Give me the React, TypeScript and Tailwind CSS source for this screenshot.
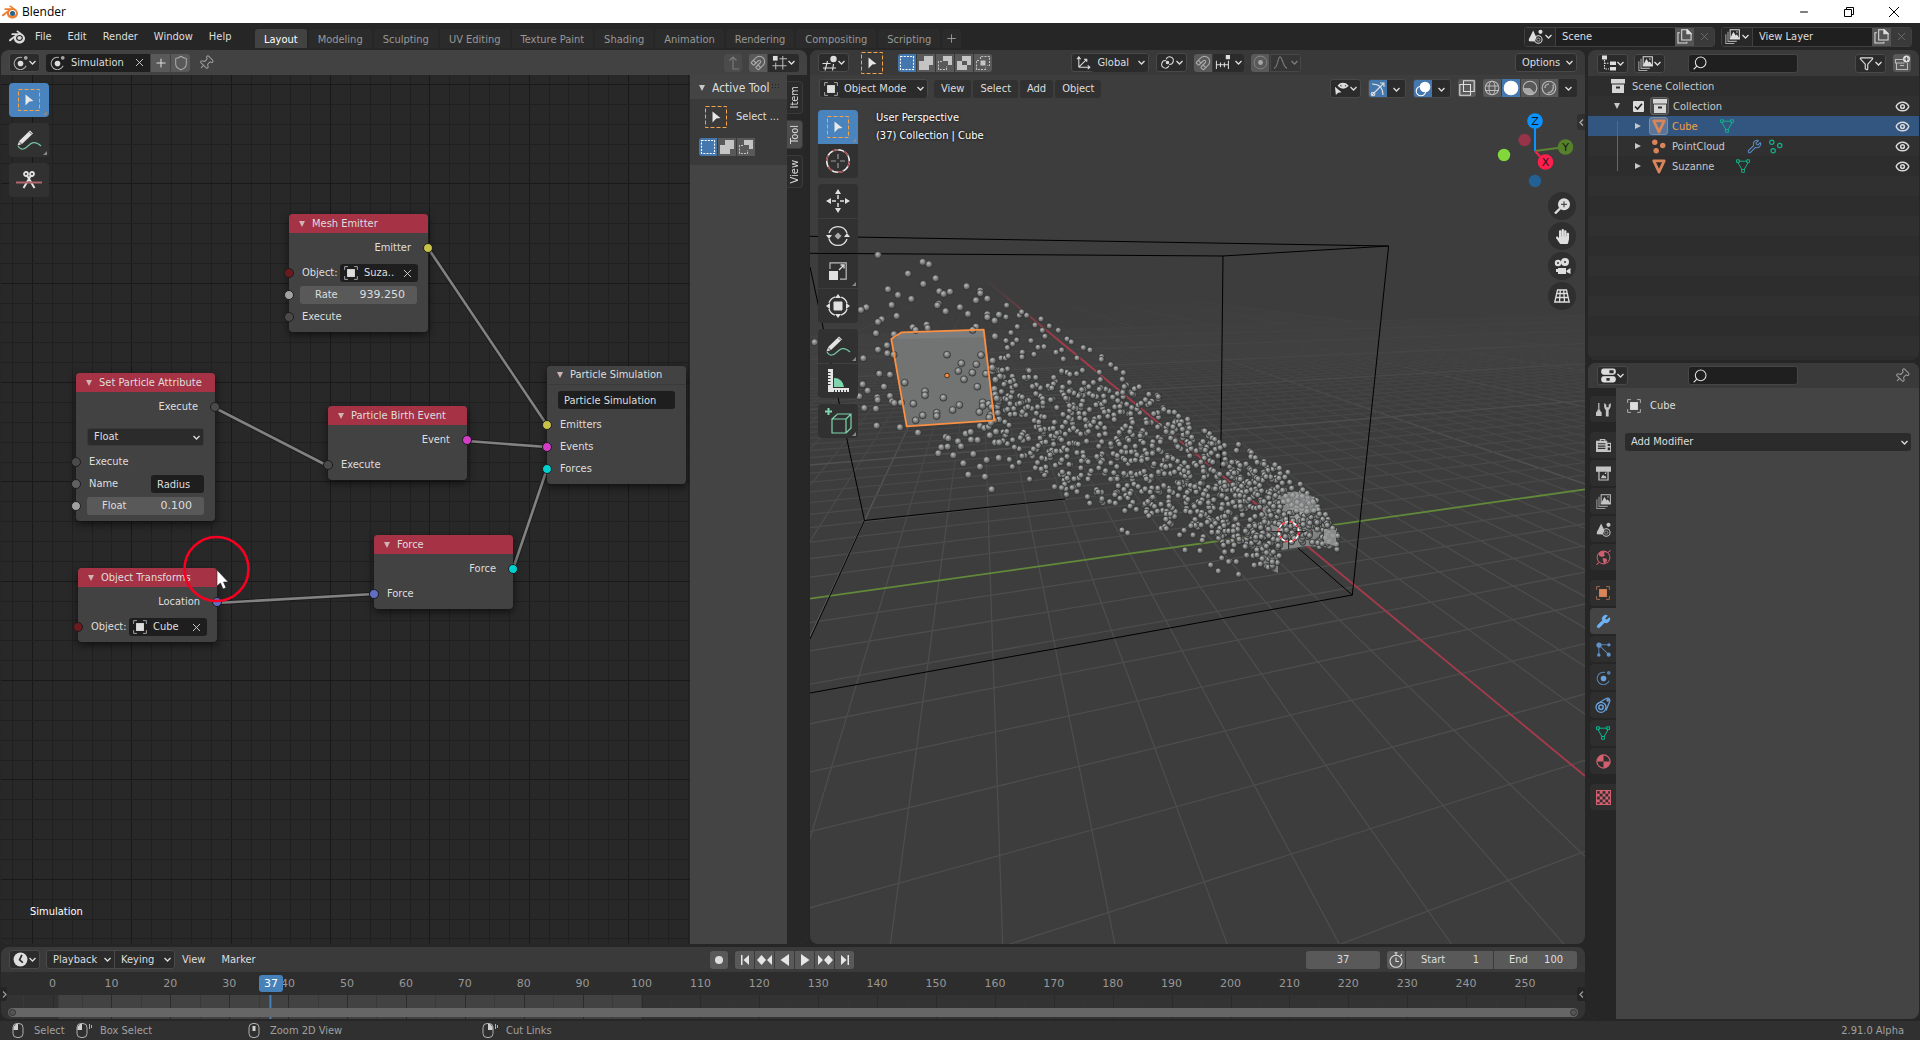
import React from "react";
import { Shield, Pin, Magnet, X, Plus, Search, Eye, Filter, Wrench, Minus } from "lucide-react";
import { SiBlender } from "react-icons/si";
import { FaHandPaper } from "react-icons/fa";

type Kids = { children?: React.ReactNode };

/* ---------- icons ---------- */

const Ic = ({ s = 14, c = "", children }: Kids & { s?: number; c?: string }) => (
  <svg width={s} height={s} viewBox="0 0 16 16" fill="none" stroke="currentColor" strokeWidth="1.1" className={`shrink-0 ${c}`} aria-hidden="true">
    {children}
  </svg>
);
const Chevron = ({ c = "" }: { c?: string }) => (
  <svg width="7" height="5" viewBox="0 0 7 5" fill="none" stroke="currentColor" strokeWidth="1.3" className={`shrink-0 ${c}`} aria-hidden="true">
    <path d="M.5 1l3 3 3-3" />
  </svg>
);
const PhysicsIcon = ({ c }: { c?: string }) => (
  <Ic s={15} c={c}>
    <circle cx="8" cy="9" r="3" fill="currentColor" stroke="none" />
    <path d="M14 11.5A6.6 6.6 0 1 1 9.5 2.6" opacity=".75" />
    <circle cx="13.6" cy="3" r="2" fill="currentColor" stroke="none" opacity=".7" />
  </Ic>
);
const ObjectIcon = ({ c }: { c?: string }) => (
  <Ic c={c}>
    <rect x="3.5" y="3.5" width="9" height="9" fill="currentColor" stroke="none" />
    <path d="M.7 4.5V.7h3.8M11.5.7h3.8v3.8M15.3 11.5v3.8h-3.8M4.5 15.3H.7v-3.8" opacity=".7" />
  </Ic>
);
const SelectBoxIcon = ({ s = 22 }: { s?: number }) => (
  <svg width={s} height={s} viewBox="0 0 22 22" aria-hidden="true" className="shrink-0">
    <path d="M.5.5h21v21H.5z" fill="none" stroke="#f7a347" strokeDasharray="4 2" />
    <path d="M7.5 5.5l8 6.5-4.2.4-3.8 4z" fill="#e8e8e8" />
  </svg>
);
const AnnotateIcon = () => (
  <svg width="26" height="22" viewBox="0 0 26 22" fill="none" aria-hidden="true">
    <path d="M2 17c3 5 7 3 10 0s7-6 13 0" stroke="#73c2a0" strokeWidth="1.2" />
    <path d="M1.5 16.5l1.7-4.5L14 1.6l3 3L6 15z" fill="#e4e4e4" />
    <path d="M13.5 3l2.5 2.5M3 12.5l3 3" stroke="#333" strokeWidth=".8" />
  </svg>
);
const MeshIcon = ({ c }: { c?: string }) => (
  <Ic c={c}>
    <path d="M3 2.5h10M2.5 4.5l4.5 8M13.5 4.5l-4.5 8" />
    <path d="M.6.9h3.2v3.2H.6zM12.2.9h3.2v3.2h-3.2zM6.4 12h3.2v3.2H6.4z" />
  </Ic>
);
const ConeIcon = () => (
  <svg width="14" height="15" viewBox="0 0 14 15" className="shrink-0" aria-hidden="true">
    <path d="M1.8 1.8h10.4L7 13z" fill="none" stroke="#d9855a" strokeWidth="2.8" strokeLinejoin="round" />
  </svg>
);
const ImagesIcon = ({ c }: { c?: string }) => (
  <Ic s={15} c={c}>
    <path d="M5.5.7h9.8v10H5.5z" />
    <path d="M6 10l3-6 2.5 4 1-1.5 2.3 3.5z" fill="currentColor" />
    <circle cx="12.7" cy="3.2" r=".8" fill="currentColor" stroke="none" />
    <path d="M3.2 3v10.2h9.3M.9 5.5v10H10" opacity=".7" />
  </Ic>
);
const SceneIcon = ({ c }: { c?: string }) => (
  <Ic s={15} c={c}>
    <path d="M5.5 1.5L9 9l-2 4.3L1 13c-.5-2 .3-3.5 1.3-4.8z" fill="currentColor" stroke="none" />
    <circle cx="11" cy="11.3" r="4" />
    <circle cx="11" cy="11.3" r="1.8" opacity=".6" />
    <circle cx="13.3" cy="3" r="2.2" fill="currentColor" stroke="none" />
  </Ic>
);
const CopyIcon = () => (
  <Ic s={15}>
    <path d="M5 .8h6l4 4v7H5z" />
    <path d="M10.5.8V5H15z" fill="currentColor" />
    <path d="M3 4H1v11h9.5v-1.5" />
  </Ic>
);
const BoxIcon = () => (
  <svg width="14" height="14" viewBox="0 0 14 14" className="shrink-0" aria-hidden="true">
    <path d="M0 0h14v4.500H0zM1 5.500h12V14H1z" fill="#d6d6d6" />
    <path d="M5 7.500h4v2H5z" fill="#2d2d2d" />
  </svg>
);
const ViewportEditorIcon = () => (
  <Ic s={16}>
    <path d="M.5 8.5h8M1 13h13M5.5 6l-2.5 9.5M11.5 9l-1 6.5" />
    <circle cx="11.5" cy="4" r="3.2" fill="currentColor" stroke="none" />
  </Ic>
);
const SnapGridIcon = () => (
  <Ic s={15}>
    <rect x="1" y="1" width="5" height="5" fill="currentColor" stroke="none" />
    <path d="M4 8v7.5M11.5 1v14.5M8 4h8M.5 11.5h15" opacity=".8" />
  </Ic>
);
const SnapIncrementIcon = () => (
  <Ic s={15}>
    <rect x="11.5" y="0" width="4.5" height="4.5" fill="currentColor" stroke="none" />
    <path d="M1.5 6v9M5.8 8v5M10 8v5M14.3 6v9M1.5 10.5h12.8" />
  </Ic>
);
const OutlinerIcon = () => (
  <Ic s={16}>
    <path d="M1 .5h5v4H1zM9 6.500h6v3.500H9zM9 12h6v3.500H9z" fill="currentColor" stroke="none" />
    <path d="M3.5 5v9H8M3.5 8.3H8" strokeDasharray="1.5 1" />
  </Ic>
);
const PropsIcon = () => (
  <Ic s={15}>
    <rect x=".8" y="1.2" width="14.4" height="5.4" rx="2" fill="currentColor" />
    <rect x=".8" y="9.4" width="14.4" height="5.4" rx="2" fill="currentColor" />
    <path d="M9 2.500h4.500v3H9zM5.800 10.600h3.500v3H5.800z" fill="#2b2b2b" stroke="none" />
  </Ic>
);
const ClockIcon = () => (
  <Ic s={15}>
    <circle cx="8" cy="8" r="7.4" fill="currentColor" stroke="none" />
    <path d="M9.5 3L7 8.3l3.5 3" stroke="#2b2b2b" strokeWidth="1.8" />
  </Ic>
);
const PivotIcon = () => (
  <Ic s={15}>
    <path d="M6.5 6A4 4 0 1 0 9.5 11.5" />
    <path d="M6.5 4.5A4 4 0 1 1 9.8 10" />
    <circle cx="8" cy="8" r="1.3" fill="currentColor" />
  </Ic>
);
const AxesIcon = () => (
  <Ic s={15}>
    <path d="M3 13V2.500M3 13h11.500M3 13l8-8M1 4.500L3 2l2 2.500M12.500 11l2.300 2-2.300 2M8.500 4.500H11.500v3" />
  </Ic>
);

/* ---------- shared controls ---------- */

const Drop = ({ label, c = "", children }: Kids & { label: string; c?: string }) => (
  <button aria-label={label} className={`flex h-[19px] w-[31px] shrink-0 items-center justify-between rounded-[3px] border border-[#494949] bg-[#2b2b2b] px-[3px] ${c}`}>
    {children}
    <Chevron />
  </button>
);
const Btn = ({ label, c = "", children }: Kids & { label: string; c?: string }) => (
  <button aria-label={label} className={`flex h-[18px] w-[18px] shrink-0 items-center justify-center ${c}`}>
    {children}
  </button>
);
const Pick = ({ label, value, c = "", pad = "pl-1.5" }: { label: string; value: string; c?: string; pad?: string }) => (
  <span className={`relative flex h-[18px] items-center rounded-[3px] bg-[#2b2b2b] ${c}`}>
    <select aria-label={label} className={`h-full w-full appearance-none bg-transparent pr-3 outline-none ${pad}`}>
      <option>{value}</option>
    </select>
    <Chevron c="pointer-events-none absolute right-[3px]" />
  </span>
);
const SearchBox = ({ label }: { label: string }) => (
  <label className="flex h-[19px] w-[110px] items-center rounded-[3px] border border-[#464646] bg-[#1f1f1f] pl-[3px]">
    <Search size={16} strokeWidth={1.6} className="shrink-0 -scale-x-100" />
    <input aria-label={label} className="w-full min-w-0 bg-transparent outline-none" />
  </label>
);
const SelectModes = ({ n }: { n: number }) => {
  const art = [
    <rect key="a" x="1.5" y="1.5" width="13" height="13" strokeDasharray="2 1.2" stroke="#fff" />,
    <path key="b" d="M6 1h9v9h-4v5H1V6h5z" fill="currentColor" stroke="none" />,
    <g key="c"><path d="M6 1h9v9h-4V6H6z" fill="currentColor" stroke="none" /><path d="M5 6.500H1.500v8h8V11" strokeDasharray="2 1.2" /></g>,
    <path key="d" fillRule="evenodd" d="M6 1h9v9h-4v5H1V6h5zM6 6v4h5V6z" fill="currentColor" stroke="none" />,
    <g key="e"><path d="M5.500 5.500h5v5h-5z" fill="currentColor" stroke="none" /><path d="M5.500 4V1.500h9v9H12M4 5.500H1.500v9h9V12" strokeDasharray="2 1.2" /></g>,
  ];
  const names = ["Set", "Extend", "Subtract", "Difference", "Intersect"];
  return (
    <div className="flex gap-px overflow-hidden rounded-[3px]">
      {art.slice(0, n).map((a, i) => (
        <Btn key={i} label={names[i]} c={i === 0 ? "bg-[#4477ae]" : "bg-[#595959] text-[#c4c4c4]"}>
          <Ic s={16}>{a}</Ic>
        </Btn>
      ))}
    </div>
  );
};
const ToolCell = ({ label, on, corner, c = "", children }: Kids & { label: string; on?: boolean; corner?: boolean; c?: string }) => (
  <button aria-label={label} className={`relative flex h-[34px] w-10 items-center justify-center ${on ? "bg-[#4a84be]" : "bg-[#313131]"} ${c}`}>
    {children}
    {corner && <span className="absolute bottom-0.5 right-0.5 border-b-4 border-l-4 border-b-[#888] border-l-transparent" />}
  </button>
);

/* ---------- title bar and top bar ---------- */

const TitleBar = () => (
  <header className="flex h-[23px] shrink-0 items-center bg-white pl-[2px] text-black">
    <span className="relative mr-1 flex">
      <SiBlender size={16} color="#ee7e30" />
      <span className="absolute left-[8px] top-[7px] h-[5px] w-[5px] rounded-full bg-[#24618f]" />
    </span>
    <h1 className="font-['Open_Sans',sans-serif] text-xs">Blender</h1>
    <div className="ml-auto flex pr-1">
      <button aria-label="Minimise" className="flex h-5 w-[45px] items-center justify-center"><Minus size={12} strokeWidth={2} /></button>
      <button aria-label="Restore" className="flex h-5 w-[45px] items-center justify-center">
        <svg width="10" height="10" viewBox="0 0 10 10" fill="none" stroke="#000" aria-hidden="true"><path d="M.5 2.500h7v7h-7zM2.500 2.500v-2h7v7h-2" /></svg>
      </button>
      <button aria-label="Close" className="flex h-5 w-[45px] items-center justify-center">
        <svg width="10" height="10" viewBox="0 0 10 10" stroke="#000" aria-hidden="true"><path d="M0 0l10 10M10 0L0 10" /></svg>
      </button>
    </div>
  </header>
);

const IdBlock = ({ icon, name, label }: { icon: React.ReactNode; name: string; label: string }) => (
  <div className="flex h-5 w-[191px] items-stretch overflow-hidden rounded-[3px] border border-[#404040] bg-[#1f1f1f]">
    <button aria-label={label} className="flex w-[31px] items-center justify-between border-r border-[#404040] bg-[#282828] px-[3px]">{icon}<Chevron /></button>
    <input aria-label={`${label} name`} defaultValue={name} className="w-0 flex-1 bg-transparent pl-1.5 outline-none" />
    <button aria-label={`New ${label}`} className="flex w-[19px] items-center justify-center bg-[#545454]"><CopyIcon /></button>
    <button aria-label={`Remove ${label}`} className="flex w-5 items-center justify-center bg-[#3a3a3a] text-[#777]"><X size={13} strokeWidth={1.4} /></button>
  </div>
);

const TopBar = () => (
  <div className="flex h-[27px] shrink-0 items-center pr-2">
    <button aria-label="Blender menu" className="ml-[9px] mr-0.5"><SiBlender size={16} color="#dadada" /></button>
    <nav className="flex w-[220px]">
      {["File", "Edit", "Render", "Window", "Help"].map((m) => (
        <button key={m} className="px-2">{m}</button>
      ))}
    </nav>
    <div className="ml-2 flex gap-0.5 self-end pb-0.5">
      {["Layout", "Modeling", "Sculpting", "UV Editing", "Texture Paint", "Shading", "Animation", "Rendering", "Compositing", "Scripting"].map((t, i) => (
        <button key={t} className={`h-[19px] rounded-t-[3px] px-[9px] pt-0.5 ${i === 0 ? "bg-[#424242] text-white" : "bg-[#2b2b2b] text-[#989898]"}`}>{t}</button>
      ))}
      <button aria-label="Add workspace" className="flex h-[19px] w-[19px] items-center justify-center rounded-t-[3px] bg-[#2b2b2b] text-[#989898]"><Plus size={13} strokeWidth={1.8} /></button>
    </div>
    <div className="ml-auto flex gap-1.5">
      <IdBlock label="Scene" name="Scene" icon={<SceneIcon />} />
      <IdBlock label="View layer" name="View Layer" icon={<ImagesIcon />} />
    </div>
  </div>
);

/* ---------- node editor ---------- */

const SOCKET: Record<string, string> = {
  yellow: "bg-[#c7c14a]", red: "bg-[#6b1a20]", grey: "bg-[#4a4a4a]", mid: "bg-[#606060]", light: "bg-[#a1a1a1]",
  pink: "bg-[#d33cc4]", cyan: "bg-[#00cfcf]", blue: "bg-[#5f6fc4]",
};
const Row = ({ out, socket, c = "", children }: Kids & { out?: boolean; socket?: string; c?: string }) => (
  <div className={`relative flex h-[22px] items-center px-[13px] ${out ? "justify-end pr-[17px]" : ""} ${c}`}>
    {socket && <span className={`absolute top-1.5 h-[10px] w-[10px] rounded-full border border-[#1c1c1c] ${out ? "-right-[5px]" : "-left-[5px]"} ${SOCKET[socket]}`} />}
    {children}
  </div>
);
const ObjectField = ({ value }: { value: string }) => (
  <label className="-mr-[3px] flex h-[18px] w-[78px] items-center gap-1.5 rounded-[3px] bg-[#1e1e1e] px-1">
    <ObjectIcon />
    <input aria-label="Object" defaultValue={value} className="w-0 flex-1 bg-transparent outline-none" />
    <X size={13} strokeWidth={1.6} className="shrink-0" />
  </label>
);
const Slider = ({ label, value }: { label: string; value: string }) => (
  <label className="-mx-[2px] flex h-[18px] flex-1 items-center justify-between rounded-[3px] bg-[#595959] pl-[15px] pr-3 text-[#ddd]">
    {label}
    <input defaultValue={value} className="w-12 bg-transparent text-right font-['DejaVu_Sans',sans-serif] outline-none" />
  </label>
);
const Node = ({ x, y, title, plain, children }: Kids & { x: number; y: number; title: string; plain?: boolean }) => (
  <section className="absolute w-[139px] rounded-[4px] bg-[#424242] pb-1 shadow-[0_3px_8px_rgba(0,0,0,0.6)]" style={{ left: x, top: y }}>
    <h2 className={`flex h-[19px] items-center gap-[7px] rounded-t-[4px] pl-2.5 font-normal ${plain ? "border-b border-[#3a3a3a] bg-[#424242]" : "bg-[#a53245]"}`}>
      <span className="border-x-[3px] border-t-[6px] border-x-transparent border-t-[#cfb4b4]" />
      {title}
    </h2>
    <div className="mt-1">{children}</div>
  </section>
);

const LINKS = [
  [428, 248, 547, 425], [215, 408, 328, 466], [467, 441, 547, 447], [513, 569, 547, 469], [217, 603, 374, 594],
];
const NodeCanvas = () => {
  const steps = (from: number, to: number, major: number) => {
    const out: { p: number; m: boolean }[] = [];
    for (let k = -5; ; k++) {
      const p = Math.round(major + k * 19.87) + 0.5;
      if (p > to) break;
      if (p > from) out.push({ p, m: k % 5 === 0 });
    }
    return out;
  };
  return (
    <div className="relative min-w-0 flex-1 overflow-hidden bg-[#282828]">
      <svg className="absolute inset-0 h-full w-full" viewBox="1 75 689 869" preserveAspectRatio="xMinYMin slice" aria-hidden="true">
        {steps(1, 690, 32).map(({ p, m }) => <path key={"v" + p} d={`M${p} 75V944`} stroke={m ? "#191919" : "#202020"} />)}
        {steps(75, 944, 84).map(({ p, m }) => <path key={"h" + p} d={`M1 ${p}H690`} stroke={m ? "#191919" : "#202020"} />)}
        {LINKS.map((l, i) => (
          <g key={i}>
            <path d={`M${l[0]} ${l[1]}L${l[2]} ${l[3]}`} stroke="#1d1d1d" strokeWidth="4.5" />
            <path d={`M${l[0]} ${l[1]}L${l[2]} ${l[3]}`} stroke="#828282" strokeWidth="2.6" />
          </g>
        ))}
      </svg>

      <Node x={288} y={139} title="Mesh Emitter">
        <Row out socket="yellow">Emitter</Row>
        <Row socket="red" c="mt-[3px] justify-between">Object:<ObjectField value="Suza..." /></Row>
        <Row socket="light"><Slider label="Rate" value="939.250" /></Row>
        <Row socket="grey">Execute</Row>
      </Node>
      <Node x={75} y={298} title="Set Particle Attribute">
        <Row out socket="grey">Execute</Row>
        <Row c="mt-2"><Pick label="Attribute type" value="Float" c="-mx-[2px] flex-1 border border-[#3a3a3a]" /></Row>
        <Row socket="grey" c="mt-[3px]">Execute</Row>
        <Row socket="mid" c="justify-between">
          Name
          <input aria-label="Name" defaultValue="Radius" className="-mr-[2px] h-[18px] w-[53px] rounded-[3px] bg-[#1e1e1e] pl-1.5 outline-none" />
        </Row>
        <Row socket="light"><Slider label="Float" value="0.100" /></Row>
      </Node>
      <Node x={327} y={331} title="Particle Birth Event">
        <Row out socket="pink">Event</Row>
        <Row socket="grey" c="mt-[3px]">Execute</Row>
      </Node>
      <Node x={546} y={291} title="Particle Simulation" plain>
        <Row><input aria-label="Simulation name" defaultValue="Particle Simulation" className="-mx-[2px] h-[18px] w-0 flex-1 rounded-[3px] bg-[#1e1e1e] pl-1.5 outline-none" /></Row>
        <Row socket="yellow" c="mt-[3px]">Emitters</Row>
        <Row socket="pink">Events</Row>
        <Row socket="cyan">Forces</Row>
      </Node>
      <Node x={373} y={460} title="Force">
        <Row out socket="cyan">Force</Row>
        <Row socket="blue" c="mt-[3px]">Force</Row>
      </Node>
      <Node x={77} y={493} title="Object Transforms">
        <Row out socket="blue">Location</Row>
        <Row socket="red" c="mt-[3px] justify-between">Object:<ObjectField value="Cube" /></Row>
      </Node>

      <svg className="absolute left-[182px] top-[460px]" width="68" height="68" viewBox="0 0 68 68" aria-hidden="true">
        <circle cx="33.5" cy="34" r="32" fill="none" stroke="#f80022" strokeWidth="2.6" />
        <path d="M34 35v16l3.500-3 2.500 6 3-1.300-2.500-5.700h4.800z" fill="#fff" stroke="#222" strokeWidth=".6" />
      </svg>

      <div className="absolute left-2 top-2 flex flex-col gap-1.5">
        <ToolCell label="Select box" on corner c="rounded-[4px]"><SelectBoxIcon /></ToolCell>
        <ToolCell label="Annotate" corner c="rounded-[4px]"><AnnotateIcon /></ToolCell>
        <ToolCell label="Links cut" c="rounded-[4px]">
          <svg width="26" height="20" viewBox="0 0 26 20" fill="none" stroke="#e0e0e0" strokeWidth="1.8" aria-hidden="true">
            <circle cx="10" cy="4" r="2" /><circle cx="16" cy="4" r="2" />
            <path d="M11 5.500l3 5 4.500 7.500M15 5.500l-3 5L7.500 18" strokeWidth="2" />
            <path d="M0 12.500h26" stroke="#b0676b" />
          </svg>
        </ToolCell>
      </div>
      <p className="absolute bottom-6 left-[29px] text-white">Simulation</p>
    </div>
  );
};

const SideTab = ({ name, on }: { name: string; on?: boolean }) => (
  <button className={`flex w-4 items-center justify-center rounded-r-[4px] border border-l-0 border-[#3a3a3a] py-1 ${on ? "bg-[#4d4d4d]" : "bg-[#2b2b2b]"}`}>
    <span className="rotate-180 [writing-mode:vertical-rl]">{name}</span>
  </button>
);

const NodeEditor = () => (
  <section aria-label="Simulation editor" className="flex min-w-0 flex-[806] flex-col overflow-hidden rounded-lg bg-[#424242]">
    <div className="flex h-[25px] shrink-0 items-center pl-2 pr-2">
      <Drop label="Editor type"><PhysicsIcon /></Drop>
      <div className="ml-1.5 flex h-[18px] gap-px overflow-hidden rounded-[3px]">
        <label className="flex w-[104px] items-center gap-1.5 bg-[#1f1f1f] pl-1 pr-1">
          <PhysicsIcon />
          <input aria-label="Simulation" defaultValue="Simulation" className="w-0 flex-1 bg-transparent outline-none" />
          <X size={13} strokeWidth={1.6} />
        </label>
        <Btn label="New" c="w-[19px] bg-[#595959]"><Plus size={14} strokeWidth={1.8} /></Btn>
        <Btn label="Fake user" c="w-[19px] bg-[#595959] text-[#a8a8a8]"><Shield size={16} strokeWidth={1.6} /></Btn>
      </div>
      <Btn label="Pin" c="ml-[7px] text-[#9a9a9a]"><Pin size={16} strokeWidth={1.6} className="rotate-45" /></Btn>
      <Btn label="Parent node tree" c="ml-auto rounded-[3px] bg-[#4b4b4b] text-[#7d7d7d]"><Ic s={16}><path d="M4.500 5.500L8 2l3.500 3.500M8 2v12h6" /></Ic></Btn>
      <div className="ml-[7px] flex h-[18px] gap-px overflow-hidden rounded-[3px]">
        <Btn label="Snap" c="bg-[#595959] text-[#a8a8a8]"><Magnet size={16} strokeWidth={1.7} /></Btn>
        <button aria-label="Snap element" className="flex w-[31px] items-center justify-between bg-[#2b2b2b] px-1"><SnapGridIcon /><Chevron /></button>
      </div>
    </div>
    <div className="flex min-h-0 flex-1">
      <NodeCanvas />
      <aside className="w-[97px] shrink-0 bg-[#444]">
        <div className="relative flex h-6 items-center gap-[7px] whitespace-nowrap pl-[9px] pt-0.5 text-xs">
          <span className="border-x-[3px] border-t-[6px] border-x-transparent border-t-[#c8c8c8]" />
          Active Tool
          <span className="absolute right-[6px] top-2 h-1.5 w-2.5 bg-[radial-gradient(#222_40%,transparent_45%)] bg-[length:3px_3px]" />
        </div>
        <div className="bg-[#3a3a3a] pb-[9px] pl-[9px] pt-[7px]">
          <div className="flex items-center gap-[9px] pl-1.5"><SelectBoxIcon /> Select ...</div>
          <div className="mt-2.5"><SelectModes n={3} /></div>
        </div>
      </aside>
      <div className="flex w-5 shrink-0 flex-col gap-1.5 bg-[#272727] pt-1.5">
        <SideTab name="Item" />
        <SideTab name="Tool" on />
        <SideTab name="View" />
      </div>
    </div>
  </section>
);

/* ---------- 3D viewport ---------- */

const HORIZON = 274;
const lerpEdge = (pts: number[][], x: number) => {
  for (let i = 1; i < pts.length; i++) {
    if (x <= pts[i][0]) {
      const [x0, y0] = pts[i - 1];
      const [x1, y1] = pts[i];
      return y0 + ((y1 - y0) * (x - x0)) / (x1 - x0);
    }
  }
  return pts[pts.length - 1][1];
};
const TOP_EDGE = [[985, 362], [1110, 366], [1150, 386], [1182, 404], [1202, 418], [1221, 428], [1252, 444], [1273, 458], [1301, 477], [1311, 490], [1322, 502], [1327, 513], [1333, 526], [1338, 530]];
const LOW_EDGE = [[985, 452], [1038, 492], [1097, 510], [1128, 520], [1160, 532], [1218, 550], [1250, 560], [1255, 578], [1278, 578], [1282, 551], [1313, 548], [1338, 550]];
const FIXED = [
  [234, 465], [368, 486], [387, 493], [324, 521], [407, 535], [370, 552], [264, 568], [418, 574], [431, 582], [450, 575], [500, 559], [541, 572], [541, 580], [528, 601], [562, 596], [620, 616], [294, 585], [334, 597], [275, 615], [416, 611], [412, 616], [437, 634], [480, 622], [504, 642], [199, 622], [183, 630], [290, 648], [245, 658], [234, 666], [228, 700], [338, 682], [347, 690], [380, 674], [383, 684], [282, 703], [261, 736], [234, 749], [262, 760], [281, 764], [190, 775], [44, 727], [238, 821], [270, 824], [252, 860], [188, 853], [203, 872], [232, 892], [233, 900], [270, 888], [276, 904], [283, 909], [303, 908], [178, 889], [193, 924], [228, 926], [230, 977], [300, 982], [354, 998], [528, 680], [518, 690], [562, 643], [562, 652], [597, 644], [584, 662], [618, 651], [633, 698], [585, 709], [652, 680], [658, 646], [680, 646], [665, 636], [723, 657], [705, 675], [727, 691], [748, 678], [775, 691], [735, 709], [801, 717], [814, 726], [618, 722], [650, 720], [638, 732], [622, 743], [693, 722], [732, 740], [714, 742], [667, 757], [666, 771], [702, 763], [785, 750], [768, 757], [850, 743], [870, 750], [905, 770], [904, 778], [831, 774], [790, 777], [578, 782], [603, 774], [616, 774], [625, 768], [932, 794], [948, 806], [970, 818],
  [441, 764], [543, 765], [484, 790], [475, 813], [529, 793], [517, 818], [492, 838], [314, 848], [532, 860], [375, 874], [375, 886], [430, 893], [340, 911], [478, 915], [458, 930], [410, 938], [410, 948], [548, 907], [548, 918], [538, 936], [368, 946], [347, 961], [558, 821],
  [437, 1011], [445, 1015], [474, 1024], [497, 1001], [512, 996], [513, 1019], [533, 1020], [483, 1039], [424, 1042], [443, 1040], [540, 978], [553, 984], [566, 980], [588, 995], [597, 958], [609, 996], [614, 1014], [415, 1060], [460, 1066], [490, 1090], [520, 1062], [540, 1100], [505, 1124], [560, 1080], [555, 1130], [575, 1168],
  [1155, 1350], [1200, 1352], [1290, 1383], [1232, 1395], [1274, 1356], [1084, 1285], [1139, 1305], [983, 1299], [966, 1290],
  [1255, 1413], [1286, 1385], [1309, 1385], [1316, 1423], [1265, 1374],
].map(([x, y]) => [800 + x / 3, 100 + y / 3]);
const PARTICLES = (() => {
  let seed = 91237;
  const rnd = () => {
    seed = (seed * 1664525 + 1013904223) % 4294967296;
    return seed / 4294967296;
  };
  const out: number[][] = FIXED.map((p) => [p[0], p[1]]);
  const bands = [[988, 1050, 140], [1050, 1110, 180], [1110, 1200, 330], [1200, 1255, 270], [1255, 1282, 170], [1282, 1338, 165]];
  for (const [a, b, n] of bands) {
    for (let i = 0; i < n; i++) {
      const x = a + rnd() * (b - a);
      const v = rnd() * 0.85 + rnd() * 0.15;
      const t = lerpEdge(TOP_EDGE, x);
      out.push([x, t + v * (lerpEdge(LOW_EDGE, x) - t)]);
    }
  }
  return out;
})();

const Scene = () => {
  const xs: number[] = [];
  for (let k = -45; k <= 40; k++) xs.push(k);
  const ys: number[] = [];
  for (let k = -60; k <= 14; k++) ys.push(k);
  return (
    <svg className="absolute inset-0 h-full w-full" viewBox="810 50 775 894" preserveAspectRatio="xMidYMid slice" role="img" aria-label="Particles flowing from a mesh inside a bounding box">
      <defs>
        <linearGradient id="fade" gradientUnits="userSpaceOnUse" x1="0" y1="285" x2="0" y2="560">
          <stop offset="0" stopColor="#fff" stopOpacity="0" />
          <stop offset=".35" stopColor="#fff" stopOpacity=".4" />
          <stop offset="1" stopColor="#fff" />
        </linearGradient>
        <linearGradient id="redFade" gradientUnits="userSpaceOnUse" x1="985" y1="280" x2="1060" y2="342">
          <stop offset="0" stopColor="#a33b4a" stopOpacity="0" />
          <stop offset="1" stopColor="#a33b4a" />
        </linearGradient>
        <mask id="gridMask" maskUnits="userSpaceOnUse" x="810" y="50" width="775" height="894"><rect x="810" y="50" width="775" height="894" fill="url(#fade)" /></mask>
        <radialGradient id="ball" cx=".42" cy=".36" r=".65">
          <stop offset="0" stopColor="#bcbdbd" />
          <stop offset=".45" stopColor="#858686" />
          <stop offset="1" stopColor="#505151" />
        </radialGradient>
      </defs>
      <g mask="url(#gridMask)" fill="none">
        {xs.map((k) => {
          const x = 1711 + 101.5 * k;
          const x2 = 980 + ((x - 980) * (944 - HORIZON)) / 606;
          const m = k % 10 === 0;
          return k !== 0 && <path key={"x" + k} d={`M980 ${HORIZON}L${x2} 944`} stroke={m ? "#5b5b5b" : "#4d4d4d"} strokeWidth={m ? 1.5 : 1.3} />;
        })}
        {ys.map((k) => {
          const m = k % 10 === 0;
          return k !== 0 && <path key={"y" + k} d={`M3108 ${HORIZON}L${-1640 + 331.2 * k} 944`} stroke={m ? "#5b5b5b" : "#4d4d4d"} strokeWidth={m ? 1.5 : 1.3} />;
        })}
      </g>
      <path d="M810 598.600L1585 489.400" stroke="#62893a" strokeWidth="1.8" />
      <path d="M981 276L1585 776" stroke="url(#redFade)" strokeWidth="1.8" />
      <g fill="none" stroke="#000" strokeWidth="1">
        <path d="M810 236.300L1388.600 246L1352.300 595L810 693" />
        <path d="M810 253.300L1223 256L1388.600 246M1223 256L1220.700 468M1298 548L1352.300 595M1065 499L864.500 520.500L810 639M864.500 520.500L849 449L817 299L810 267" />
      </g>
      <path d="M891.300 339l10.400-6.700 82-2.600 10.600 90.600-87.600 6z" fill="#727473" />
      <path d="M891.300 339l10.400-6.700 82-2.600 1 7.500z" fill="#7a7c7d" />
      <g>
        <path d="M1262 505l14-13h30l16 24-4 28-36 6-16-16z" fill="#868787" />
        <path d="M1285 500l20-8 14 18-22 10z" fill="#9ea0a0" />
        <path d="M1262 555h16v18l-14-6zM1318 528h19v20l-30-2z" fill="#808181" />
      </g>
      {PARTICLES.map(([x, y], i) => (
        <circle key={i} cx={x} cy={y} r={x < 1000 ? 3.5 : 3} fill="url(#ball)" stroke="#262626" strokeOpacity=".75" strokeWidth=".8" />
      ))}
      <path d="M1278 498l16-7 18 5 8 14-14 4-14-4z" fill="#a3a5a5" opacity=".55" />
      <path d="M1324 529l12 1v16l-12-3z" fill="#9a9c9c" opacity=".8" />
      <path d="M891.300 339l10.400-6.700 82-2.600 10.600 90.600-87.600 6z" fill="none" stroke="#fb8f42" strokeWidth="1.8" strokeLinejoin="round" />
      <circle cx="947" cy="375.5" r="2.3" fill="#fb8f42" stroke="#30200f" strokeWidth=".8" />
      <g fill="none" strokeWidth="1.3">
        <circle cx="1288.7" cy="531.7" r="10" stroke="#fff" />
        <circle cx="1288.7" cy="531.7" r="10" stroke="#f0202c" strokeDasharray="3.93" />
        <path d="M1288.700 514v11M1288.700 538v11M1271 531.700h11M1295 531.700h11" stroke="#1c1c1c" strokeWidth="1" />
      </g>
    </svg>
  );
};

const Gizmo = () => (
  <svg width="80" height="80" viewBox="1497 110 80 80" aria-label="Navigation gizmo" role="img" className="font-['DejaVu_Sans',sans-serif] [text-shadow:none]">
    <circle cx="1524.6" cy="140" r="6.2" fill="#96344a" />
    <circle cx="1535" cy="181" r="6.2" fill="#236094" />
    <circle cx="1504" cy="155" r="6.2" fill="#82d83b" />
    <path d="M1535 151l30-4" stroke="#5f8433" strokeWidth="2" />
    <path d="M1535 151v-30" stroke="#0a93ff" strokeWidth="2" />
    <path d="M1535 151l10 11" stroke="#ff1f4f" strokeWidth="2" />
    <circle cx="1565.5" cy="147" r="7.8" fill="#56802c" />
    <circle cx="1535" cy="121" r="7.8" fill="#0a93ff" />
    <circle cx="1545.5" cy="162" r="7.8" fill="#ff1f4f" />
    <g fill="#161616" fontSize="11" textAnchor="middle">
      <text x="1565.5" y="151">Y</text><text x="1535" y="125">Z</text><text x="1545.5" y="166">X</text>
    </g>
  </svg>
);

const RoundBtn = ({ label, children }: Kids & { label: string }) => (
  <button aria-label={label} className="mr-px flex h-7 w-7 items-center justify-center rounded-full bg-[#2f2f2f] text-[#dedede]">{children}</button>
);

const Viewport = () => (
  <section aria-label="3D viewport" className="relative flex min-w-0 flex-[775] flex-col overflow-hidden rounded-lg bg-[#3d3d3d]">
    <Scene />
    <div className="relative flex h-[25px] shrink-0 items-center bg-[#393939] px-2">
      <Drop label="Editor type"><ViewportEditorIcon /></Drop>
      <span className="ml-3 mr-[15px]"><SelectBoxIcon /></span>
      <SelectModes n={5} />
      <span className="flex-[80]" />
      <label className="flex h-[19px] w-[78px] items-center rounded-[3px] border border-[#494949] bg-[#2b2b2b] pl-1">
        <AxesIcon />
        <Pick label="Orientation" value="Global" c="h-[17px] flex-1" />
      </label>
      <Drop label="Pivot point" c="ml-[7px]"><PivotIcon /></Drop>
      <div className="ml-[7px] flex h-[18px] gap-px overflow-hidden rounded-[3px]">
        <Btn label="Snap" c="bg-[#595959] text-[#a8a8a8]"><Magnet size={16} strokeWidth={1.7} /></Btn>
        <button aria-label="Snap to" className="flex w-[31px] items-center justify-between bg-[#2b2b2b] px-0.5"><SnapIncrementIcon /><Chevron /></button>
      </div>
      <div className="ml-[7px] flex h-[18px] gap-px overflow-hidden rounded-[3px]">
        <Btn label="Proportional editing" c="bg-[#595959] text-[#a8a8a8]"><Ic s={15}><circle cx="8" cy="8" r="6.8" opacity=".5" /><circle cx="8" cy="8" r="2" fill="currentColor" /></Ic></Btn>
        <button aria-label="Falloff" className="flex w-[31px] items-center justify-between border border-[#474747] bg-[#353535] px-0.5 text-[#7d7d7d]">
          <Ic s={15}><path d="M1 14c4 0 4-12 6.500-12S11 14 15 14" /></Ic><Chevron />
        </button>
      </div>
      <span className="flex-[215]" />
      <button className="flex h-[19px] w-[62px] items-center justify-between rounded-[3px] border border-[#494949] bg-[#2b2b2b] pl-[6px] pr-[3px]">Options <Chevron /></button>
    </div>
    <div className="relative mt-1 flex h-[19px] shrink-0 items-center pl-[9px] pr-2">
      <label className="mr-1.5 flex h-[19px] w-[109px] items-center rounded-[3px] border border-[#494949] bg-[#2b2b2b] pl-1">
        <ObjectIcon />
        <Pick label="Mode" value="Object Mode" c="h-[17px] flex-1" />
      </label>
      <div className="flex gap-0.5">
        {["View", "Select", "Add", "Object"].map((m) => <button key={m} className="h-[18px] rounded-[3px] bg-[#313131] px-[7px]">{m}</button>)}
      </div>
      <div className="ml-auto flex gap-[7px]">
        <Drop label="Object types visibility">
          <Ic s={15}><path d="M5 5c2-3 7-3 9.500 0-2.500 3-7 3-9.500 0z" strokeWidth="1.8" /><circle cx="9.8" cy="5" r="1.5" fill="currentColor" /><path d="M1 6l7 6-3.500.4L2 15z" fill="currentColor" stroke="none" /></Ic>
        </Drop>
        <div className="flex h-[19px] overflow-hidden rounded-[3px] border border-[#494949]">
          <Btn label="Gizmos" c="bg-[#4477ae]"><Ic s={16}><path d="M2 14L14 2M10 2h4v4M2 3c7 0 11 4 11 11" /><circle cx="3" cy="13" r="1.8" /></Ic></Btn>
          <Btn label="Gizmo options" c="bg-[#2b2b2b]"><Chevron /></Btn>
        </div>
        <div className="flex h-[19px] overflow-hidden rounded-[3px] border border-[#494949]">
          <Btn label="Overlays" c="bg-[#4477ae] text-white"><Ic s={16}><circle cx="10" cy="6" r="4.8" fill="currentColor" /><circle cx="6" cy="10" r="4.8" /></Ic></Btn>
          <Btn label="Overlay options" c="bg-[#2b2b2b]"><Chevron /></Btn>
        </div>
        <Btn label="X-ray" c="rounded-[3px] bg-[#595959]"><Ic s={16}><path d="M4.500.8h10.700v10.700H4.500zM.8 4.500h10.700v10.700H.8z" /></Ic></Btn>
        <div className="flex h-[18px] gap-px overflow-hidden rounded-[3px]">
          <Btn label="Wireframe" c="bg-[#595959] text-[#bbb]"><Ic s={16}><circle cx="8" cy="8" r="6.8" /><ellipse cx="8" cy="8" rx="3" ry="6.8" /><path d="M1.500 6h13M1.500 10.500h13" /></Ic></Btn>
          <Btn label="Solid" c="bg-[#4477ae] text-white"><Ic s={16}><circle cx="8" cy="8" r="6.8" fill="currentColor" /></Ic></Btn>
          <Btn label="Material preview" c="bg-[#595959] text-[#bbb]"><Ic s={16}><circle cx="8" cy="8" r="6.8" /><path d="M8 1.500V8l5 5a6.500 6.500 0 0 1-11-5h6z" fill="currentColor" stroke="none" opacity=".8" /></Ic></Btn>
          <Btn label="Rendered" c="bg-[#595959] text-[#bbb]"><Ic s={16}><circle cx="8" cy="8" r="6.8" /><path d="M12 4.500c1.500 3.500-.5 8-5.500 8.500M4 8c0-2 1.500-4 4-4" strokeWidth="1.6" opacity=".8" /></Ic></Btn>
          <Btn label="Shading options" c="bg-[#2b2b2b]"><Chevron /></Btn>
        </div>
      </div>
    </div>
    <div className="relative flex items-start pl-2 pt-3">
      <div className="flex flex-col gap-1.5 text-[#e0e0e0]">
        <div className="flex flex-col overflow-hidden rounded-[4px]">
          <ToolCell label="Select box" on corner><SelectBoxIcon /></ToolCell>
          <ToolCell label="Cursor">
            <svg width="26" height="26" viewBox="0 0 26 26" fill="none" aria-hidden="true">
              <circle cx="13" cy="13" r="11.3" stroke="#eee" strokeWidth="1.5" />
              <circle cx="13" cy="13" r="11.3" stroke="#9c464c" strokeWidth="1.5" strokeDasharray="5.9" />
              <path d="M13 6v5M13 15v5M6 13h5M15 13h5" stroke="#999" strokeWidth="1.2" />
            </svg>
          </ToolCell>
        </div>
        <div className="flex flex-col gap-px overflow-hidden rounded-[4px]">
          <ToolCell label="Move">
            <svg width="24" height="24" viewBox="0 0 24 24" fill="currentColor" aria-hidden="true">
              <path d="M12 0l3 5H9zM12 24l3-5H9zM0 12l5-3v6zM24 12l-5-3v6z" />
              <path d="M12 6v4M12 14v4M6 12h4M14 12h4" stroke="currentColor" strokeWidth="1.5" />
            </svg>
          </ToolCell>
          <ToolCell label="Rotate">
            <svg width="24" height="22" viewBox="0 0 24 22" fill="none" stroke="currentColor" strokeWidth="1.3" aria-hidden="true">
              <path d="M3 8a9.500 9.500 0 0 1 18 0M3 14a9.500 9.500 0 0 0 18 0" />
              <path d="M0 10h6l-3 4zM18 12h6l-3-4z" fill="currentColor" stroke="none" />
              <path d="M12 7.500l3.500 3.500-3.500 3.500L8.500 11z" fill="#aaa" stroke="none" />
            </svg>
          </ToolCell>
          <ToolCell label="Scale" corner>
            <svg width="18" height="18" viewBox="0 0 18 18" fill="none" stroke="currentColor" aria-hidden="true">
              <path d="M1 7V.8h16.200v16.400H11" strokeWidth="1.2" opacity=".8" />
              <path d="M0 9h9v9H0z" fill="currentColor" stroke="none" />
              <path d="M10 8l4-4M11.500 3H15v3.500" strokeWidth="1.3" />
            </svg>
          </ToolCell>
          <ToolCell label="Transform">
            <svg width="24" height="24" viewBox="0 0 24 24" fill="none" stroke="currentColor" aria-hidden="true">
              <circle cx="12" cy="12" r="9.5" strokeWidth="1.3" strokeDasharray="9 5.9" strokeDashoffset="-3" />
              <path d="M8 8h8v8H8z" fill="currentColor" />
              <path d="M12 0l3 4H9zM12 24l3-4H9zM0 12l4-3v6zM24 12l-4-3v6z" fill="currentColor" stroke="none" />
            </svg>
          </ToolCell>
        </div>
        <div className="flex flex-col gap-px overflow-hidden rounded-[4px]">
          <ToolCell label="Annotate" corner><AnnotateIcon /></ToolCell>
          <ToolCell label="Measure">
            <svg width="22" height="24" viewBox="0 0 22 24" aria-hidden="true">
              <path d="M1 0h5v19h16v4H1z" fill="#e4e4e4" />
              <path d="M1 3.500h2.500M1 6.500h2.500M1 9.500h2.500M1 12.500h2.500M1 15.500h2.500M7.500 23v-2M10.500 23v-2M13.500 23v-2M16.500 23v-2M19.500 23v-2" stroke="#333" />
              <path d="M7 9a9.500 9.500 0 0 1 10 9H7z" fill="#7fd6ae" />
            </svg>
          </ToolCell>
        </div>
        <ToolCell label="Add cube" corner c="rounded-[4px]">
          <svg width="28" height="28" viewBox="0 0 28 28" fill="none" stroke="#7fd6ae" strokeWidth="1.2" aria-hidden="true">
            <path d="M1 4.500h7M4.500 1v7" strokeWidth="2" />
            <path d="M8 12h14v14H8zM8 12l5.500-5H27v14l-5 5M22 12l5-5" />
          </svg>
        </ToolCell>
      </div>
      <div className="ml-[18px] -mt-px leading-[18px] text-white [text-shadow:0_0_3px_#000]">
        <p>User Perspective</p>
        <p>(37) Collection | Cube</p>
      </div>
      <div className="ml-auto flex flex-col items-end gap-0.5 pr-2">
        <Gizmo />
        <RoundBtn label="Zoom">
          <svg width="16" height="16" viewBox="0 0 16 16" aria-hidden="true"><circle cx="10" cy="6.3" r="6" fill="currentColor" /><path d="M6 10.500L1 15.500" stroke="currentColor" strokeWidth="2.4" /><path d="M10 3.300v6M7 6.300h6" stroke="#2f2f2f" /></svg>
        </RoundBtn>
        <RoundBtn label="Pan"><FaHandPaper size={15} /></RoundBtn>
        <RoundBtn label="Camera view">
          <svg width="17" height="17" viewBox="0 0 17 17" fill="currentColor" aria-hidden="true">
            <path fillRule="evenodd" d="M4 1.800a3.200 3.200 0 1 1 0 6.400 3.200 3.200 0 0 1 0-6.400zm0 2.200a1 1 0 1 0 0 2 1 1 0 0 0 0-2zM11 0a4 4 0 1 1 0 8 4 4 0 0 1 0-8zm0 3a1 1 0 1 0 0 2 1 1 0 0 0 0-2z" />
            <path d="M4 10h8v6H4zM12.500 12.500L16.500 10v6l-4-2zM2 11h2v3H2z" />
          </svg>
        </RoundBtn>
        <RoundBtn label="Perspective">
          <svg width="16" height="14" viewBox="0 0 16 14" fill="none" stroke="currentColor" strokeWidth="1.3" aria-hidden="true">
            <path d="M3.500 1h9l2.700 12H.8zM2.700 4.500h10.600M1.700 8.500h12.600M6.300 1L5.500 13M9.700 1l.8 12" />
          </svg>
        </RoundBtn>
      </div>
      <button aria-label="Show sidebar" className="absolute right-0 top-4 flex h-4 w-2 items-center justify-center rounded-l-[3px] bg-[#303030] text-[#aaa]">
        <Chevron c="rotate-90" />
      </button>
    </div>
  </section>
);

/* ---------- timeline ---------- */

const FRAME = 5.89;
const frameX = (f: number) => 51.5 + f * FRAME;
const PlayBtn = ({ label, d }: { label: string; d: string }) => (
  <button aria-label={label} className="flex h-[18px] w-[19px] items-center justify-center bg-[#595959]">
    <svg width="16" height="12" viewBox="0 0 16 12" fill="#e6e6e6" aria-hidden="true"><path d={d} /></svg>
  </button>
);

const Timeline = () => (
  <section aria-label="Timeline" className="relative flex h-[72px] shrink-0 flex-col overflow-hidden rounded-lg bg-[#2d2d2d]">
    <div className="flex h-[25px] shrink-0 items-center bg-[#3a3a3a] px-2">
      <Drop label="Editor type"><ClockIcon /></Drop>
      <div className="ml-1.5 flex h-[19px] overflow-hidden rounded-[3px] border border-[#494949] bg-[#2b2b2b]">
        <button className="flex w-[68px] items-center justify-between border-r border-[#494949] pl-1.5 pr-[3px]">Playback <Chevron /></button>
        <button className="flex w-[59px] items-center justify-between pl-1.5 pr-[3px]">Keying <Chevron /></button>
      </div>
      <button className="ml-[7px]">View</button>
      <button className="ml-4">Marker</button>
      <span className="flex-[455]" />
      <Btn label="Auto keying" c="rounded-[3px] bg-[#595959]"><span className="h-2 w-2 rounded-full bg-[#ddd]" /></Btn>
      <div className="ml-[7px] flex gap-px overflow-hidden rounded-[3px]">
        <PlayBtn label="Jump to start" d="M4 1h1.500v10H4zM12 1v10L6.500 6z" />
        <PlayBtn label="Previous keyframe" d="M0 6l4.500-5L9 6l-4.500 5zM15 1v10L10 6z" />
        <PlayBtn label="Play backwards" d="M12 0v12L3.500 6z" />
        <PlayBtn label="Play" d="M4 0v12l8.500-6z" />
        <PlayBtn label="Next keyframe" d="M1 1v10l5-5zM7 6l4.500-5L16 6l-4.500 5z" />
        <PlayBtn label="Jump to end" d="M4 1v10l5.500-5zM10.500 1H12v10h-1.500z" />
      </div>
      <span className="flex-[452]" />
      <input aria-label="Current frame" defaultValue="37" className="h-[18px] w-[74px] rounded-[3px] bg-[#595959] text-center outline-none" />
      <div className="ml-[7px] flex h-[18px] gap-px overflow-hidden rounded-[3px]">
        <Btn label="Use preview range" c="bg-[#595959]"><Ic s={16}><circle cx="8" cy="9.3" r="6" /><path d="M8 5.500v4h3M6.500.7h3M8 .7v2.500M12.500 4L14 2.500" /></Ic></Btn>
        <label className="flex w-[87px] items-center justify-between bg-[#595959] pl-[15px] pr-3.5">Start <input defaultValue="1" className="w-6 bg-transparent text-right outline-none" /></label>
        <label className="flex w-[83px] items-center justify-between bg-[#595959] pl-[15px] pr-3.5">End <input defaultValue="100" className="w-8 bg-transparent text-right outline-none" /></label>
      </div>
    </div>
    <div className="relative h-[23px] shrink-0 font-['DejaVu_Sans',sans-serif] text-[11px] text-[#989898]">
      {Array.from({ length: 26 }, (_, i) => (
        <span key={i} className="absolute top-1 -translate-x-1/2" style={{ left: frameX(i * 10) }}>{i * 10}</span>
      ))}
      <span className="absolute top-[3px] z-10 flex h-[17px] w-6 -translate-x-1/2 items-center justify-center rounded-[3px] bg-[#4681b9] text-white" style={{ left: frameX(37) + 0.5 }}>37</span>
    </div>
    <div className="relative flex-1 overflow-hidden bg-[#333]">
      <svg className="absolute inset-0 h-full w-full" aria-hidden="true">
        <rect x={frameX(1)} width={frameX(100) - frameX(1)} height="24" fill="#424242" />
        {Array.from({ length: 53 }, (_, i) => i - 1).map((i) => (
          <rect key={i} x={Math.round(frameX(i * 5))} width="1" height="24" fill={i % 2 ? "#3a3a3a" : "#2a2a2a"} opacity={i > 20 && i % 2 ? 0.4 : 0.9} />
        ))}
        <rect x={frameX(37) - 1} y="-4" width="2" height="28" fill="#4681b9" />
      </svg>
      <div className="absolute inset-x-[7px] top-[13px] flex h-[9px] items-center justify-between rounded-full bg-[#666] px-px">
        <span className="h-[7px] w-[7px] rounded-full border border-[#333] bg-[#555]" />
        <span className="h-[7px] w-[7px] rounded-full border border-[#333] bg-[#555]" />
      </div>
    </div>
    <button aria-label="Show channels" className="absolute left-0 top-[40px] flex h-3.5 w-1.5 items-center justify-center rounded-r-[3px] bg-[#242424] text-[#999]"><Chevron c="-rotate-90" /></button>
    <button aria-label="Show sidebar" className="absolute right-0 top-[40px] flex h-3.5 w-2 items-center justify-center rounded-l-[3px] bg-[#242424] text-[#999]"><Chevron c="rotate-90" /></button>
  </section>
);

/* ---------- outliner ---------- */

const EyeBtn = ({ name }: { name: string }) => (
  <button aria-label={`Hide ${name}`} className="ml-auto mr-[9px] text-[#d8d8d8]"><Eye size={15} strokeWidth={2.4} /></button>
);
const Tri = ({ open }: { open?: boolean }) =>
  open ? (
    <span className="border-x-[3px] border-t-[6px] border-x-transparent border-t-[#c8c8c8]" />
  ) : (
    <span className="border-y-[3px] border-l-[6px] border-y-transparent border-l-[#c8c8c8]" />
  );
const Item = ({ name, icon, extra, on }: { name: string; icon: React.ReactNode; extra: React.ReactNode; on?: boolean }) => (
  <li className={`flex h-5 items-center pl-[47px] ${on ? "bg-[#335680]" : "odd:bg-[#2d2d2d] even:bg-[#303030]"}`}>
    <Tri />
    <span className={`ml-2 mr-1 flex h-[18px] w-[19px] items-center justify-center rounded-[3px] ${on ? "border border-[#7d8ea3] bg-[#5a7597]" : ""}`}>{icon}</span>
    <span className={`pt-0.5 ${on ? "text-[#f5a03c]" : "text-[#c9c9c9]"}`}>{name}</span>
    <span className="ml-5 flex gap-1.5 text-[#12b189]">{extra}</span>
    <EyeBtn name={name} />
  </li>
);
const PointsIcon = ({ fill }: { fill?: boolean }) => (
  <Ic s={15} c={fill ? "text-[#d9855a]" : ""}>
    <g fill={fill ? "currentColor" : "none"} strokeWidth="1.3">
      <circle cx="4" cy="3.5" r="2.3" /><circle cx="12.5" cy="7" r="2.3" /><circle cx="5.5" cy="12.5" r="2.3" />
    </g>
  </Ic>
);

const Outliner = () => (
  <section aria-label="Outliner" className="flex min-h-0 flex-[310] flex-col overflow-hidden rounded-lg bg-[#2d2d2d]">
    <div className="flex h-[26px] shrink-0 items-center bg-[#3a3a3a] px-2 pl-[9px]">
      <Drop label="Editor type"><OutlinerIcon /></Drop>
      <Drop label="Display mode" c="ml-[6px] mr-[23px]"><ImagesIcon /></Drop>
      <SearchBox label="Filter outliner" />
      <Drop label="Filter" c="ml-auto"><Filter size={15} strokeWidth={1.8} /></Drop>
      <Btn label="New collection" c="ml-[7px] rounded-[3px] bg-[#595959]">
        <Ic s={16}><path d="M9 4.500H1.500V8h9M2.500 8v6.500h11V8M6 10.500h4" opacity=".75" /><circle cx="12.5" cy="4" r="3.5" fill="currentColor" stroke="none" /><path d="M12.500 2v4M10.500 4h4" stroke="#555" /></Ic>
      </Btn>
    </div>
    <ul className="relative flex-1 bg-[repeating-linear-gradient(#2d2d2d_0_20px,#303030_20px_40px)] text-[#c9c9c9]">
      <li className="flex h-5 items-center gap-[7px] pl-[23px]"><BoxIcon /><span className="pt-0.5">Scene Collection</span></li>
      <li className="flex h-5 items-center pl-[26px]">
        <Tri open />
        <label className="ml-[13px] mr-1.5 flex">
          <input type="checkbox" defaultChecked aria-label="Enable collection" className="peer absolute h-0 w-0 appearance-none" />
          <svg width="11" height="11" viewBox="0 0 11 11" aria-hidden="true"><rect width="11" height="11" rx="1" fill="#dcdcdc" /><path d="M2 5.500l2.500 2.500L9 2.800" fill="none" stroke="#222" strokeWidth="1.6" /></svg>
        </label>
        <span className="mr-1 flex h-[18px] w-[19px] items-center justify-center rounded-[3px] border border-[#636363] bg-[#484848]"><BoxIcon /></span>
        <span className="pt-0.5">Collection</span>
        <EyeBtn name="Collection" />
      </li>
      <Item name="Cube" on icon={<ConeIcon />} extra={<MeshIcon c="ml-0.5" />} />
      <Item name="PointCloud" icon={<PointsIcon fill />} extra={<><Wrench size={15} strokeWidth={1.7} className="ml-0.5 text-[#5b8fc9]" /><PointsIcon /></>} />
      <Item name="Suzanne" icon={<ConeIcon />} extra={<MeshIcon c="ml-0.5" />} />
      <li aria-hidden="true" className="absolute left-[29px] top-[45px] h-[50px] w-px bg-[#666]" />
    </ul>
  </section>
);

/* ---------- properties ---------- */

const Solid = ({ d, c }: { d: string; c?: string }) => (
  <Ic s={15} c={c}><path d={d} fill="currentColor" stroke="none" fillRule="evenodd" /></Ic>
);
const PROP_TABS: { name: string; icon: React.ReactNode; c: string; gap?: boolean; on?: boolean }[] = [
  { name: "Tool", c: "text-[#c4c4c4]", icon: <Ic s={15}><path d="M3 1v7" strokeWidth="1.3" /><path d="M1.500 8h3v1.500L6 11v4H0v-4l1.500-1.500z" fill="currentColor" stroke="none" /><path d="M10.500 15.500V8.500C8.500 7 8.300 3.500 9 1l2 2v2.500h2.500V3l2-2c.8 3 0 6-2 7.500v7z" fill="currentColor" stroke="none" /></Ic> },
  { name: "Render", c: "text-[#c4c4c4]", gap: true, icon: <Solid d="M4 1h6v2h2V5h4v10H0V3h4zM5.200 2.200V3h3.600v-.8zM2 5.500v1.200h8V5.500zM2 8v1.200h8V8zM2 10.500v1.200h8v-1.200zM12.500 6.500v2H15v-2zM12.500 10v3H15v-3z" /> },
  { name: "Output", c: "text-[#c4c4c4]", icon: <Solid d="M0 .5h16V6h-2.500v9.500h-11V6H0zM3.800 6v8.300h8.400V6zM5 13l2.500-4L9 11l.8-1 1.500 3zM9.500 7h1.500v1.500H9.500z" /> },
  { name: "View layer", c: "text-[#c4c4c4]", icon: <ImagesIcon /> },
  { name: "Scene", c: "text-[#c4c4c4]", icon: <SceneIcon /> },
  { name: "World", c: "text-[#cf6070]", icon: <Ic s={15}><circle cx="8" cy="8" r="6.8" /><path d="M3 3.500C5 1.500 8 1 9.500 2L8.500 4l1 2-3 1.500-3-1zM7 8.500l4 .5 1 2.500-3 3.500-1.500-3z" fill="currentColor" stroke="none" /><path d="M13 2.500L15.500.5M3 13.500L.5 15.500" /></Ic> },
  { name: "Object", c: "text-[#d9855a]", gap: true, icon: <ObjectIcon /> },
  { name: "Modifiers", c: "text-[#6cb2f5]", on: true, icon: <Wrench size={15} strokeWidth={1.5} fill="currentColor" /> },
  { name: "Particles", c: "text-[#5f93cb]", icon: <Ic s={15}><path d="M3 3h10M3 3v10M3 3l10 10" opacity=".8" /><circle cx="3.2" cy="3.2" r="2.8" fill="currentColor" stroke="none" /><circle cx="13.8" cy="3" r="1.8" fill="currentColor" stroke="none" /><circle cx="3" cy="13.8" r="1.8" fill="currentColor" stroke="none" /><circle cx="13.5" cy="13.5" r="2.2" fill="currentColor" stroke="none" /></Ic> },
  { name: "Physics", c: "text-[#68a2dd]", icon: <PhysicsIcon /> },
  { name: "Constraints", c: "text-[#68a2dd]", icon: <Ic s={16}><path d="M2 7l9-5.500c3-1 4.500 1 3.500 3.500L11 13.500" strokeWidth="1.3" /><circle cx="6" cy="10.3" r="5" strokeWidth="1.3" /><circle cx="6" cy="10.3" r="2.2" strokeWidth="1.5" /><circle cx="12.7" cy="3.3" r=".8" fill="currentColor" /></Ic> },
  { name: "Object data", c: "text-[#00bf91]", icon: <MeshIcon /> },
  { name: "Material", c: "text-[#d3606e]", icon: <Ic s={15}><circle cx="8" cy="8" r="7" strokeWidth="1.3" /><path d="M8 1v7H1.200A7 7 0 0 1 8 1zM8 8h6.800A7 7 0 0 1 8 15z" fill="currentColor" stroke="none" /></Ic> },
  { name: "Texture", c: "text-[#d3606e]", gap: true, icon: <Ic s={15}><rect x=".6" y=".6" width="14.8" height="14.8" strokeWidth="1.2" /><path d="M4 1h3v3H4zM10 1h3v3h-3zM1 4h3v3H1zM7 4h3v3H7zM13 4h2v3h-2zM4 7h3v3H4zM10 7h3v3h-3zM1 10h3v3H1zM7 10h3v3H7zM13 10h2v3h-2zM4 13h3v2H4zM10 13h3v2h-3z" fill="currentColor" stroke="none" /></Ic> },
];

const Properties = () => (
  <section aria-label="Properties" className="flex min-h-0 flex-[656] flex-col overflow-hidden rounded-lg bg-[#444]">
    <div className="flex h-[25px] shrink-0 items-center bg-[#3a3a3a] pl-[9px] pr-2">
      <Drop label="Editor type" c="mr-[60px]"><PropsIcon /></Drop>
      <SearchBox label="Search properties" />
      <Btn label="Pin" c="ml-auto text-[#9a9a9a]"><Pin size={16} strokeWidth={1.6} className="rotate-45" /></Btn>
    </div>
    <div className="flex flex-1">
      <nav className="flex w-7 flex-col gap-0.5 bg-[#262626] pl-0.5 pt-2">
        {PROP_TABS.map((t) => (
          <button key={t.name} aria-label={t.name} className={`flex h-[26px] items-center justify-center rounded-l-[4px] ${t.c} ${t.gap ? "mt-2" : ""} ${t.on ? "bg-[#444]" : "bg-[#2e2e2e]"}`}>
            {t.icon}
          </button>
        ))}
      </nav>
      <div className="flex-1 pl-[9px] pr-2 pt-[9px]">
        <h2 className="flex h-[18px] items-center gap-[9px] pl-0.5 font-normal"><ObjectIcon />Cube</h2>
        <Pick label="Add modifier" value="Add Modifier" c="mt-[18px]" />
      </div>
    </div>
  </section>
);

/* ---------- status bar ---------- */

const Mouse = ({ d, drag }: { d: string; drag?: boolean }) => (
  <svg width="17" height="15" viewBox="0 0 17 15" fill="none" stroke="#b0b0b0" aria-hidden="true">
    <rect x="1" y=".5" width="10" height="14" rx="4" />
    <path d={d} fill="#d0d0d0" stroke="none" />
    {drag && <path d="M13.500 1v5M15.500 2v3" />}
  </svg>
);
const StatusBar = () => (
  <footer className="mt-0.5 flex h-[19px] shrink-0 items-center bg-[#303030] pl-3 pr-4 text-[#a0a0a0]">
    <span className="flex w-[64px] items-center gap-[5px]"><Mouse d="M1.500 7V4L4 1h2v6z" />Select</span>
    <span className="flex w-[172px] items-center gap-[7px]"><Mouse d="M1.500 7V4L4 1h2v6z" drag />Box Select</span>
    <span className="flex w-[234px] items-center gap-[5px]"><Mouse d="M4.500 3h3v5h-3z" />Zoom 2D View</span>
    <span className="flex items-center gap-[7px]"><Mouse d="M10.500 7V4L8 1H6v6z" drag />Cut Links</span>
    <span className="ml-auto">2.91.0 Alpha</span>
  </footer>
);

export default function App() {
  return (
    <div className="flex h-screen min-h-[720px] flex-col overflow-hidden bg-[#262626] font-['DejaVu_Sans_Condensed','DejaVu_Sans',sans-serif] text-[11px] leading-4 text-[#dedede]">
      <TitleBar />
      <TopBar />
      <main className="flex min-h-0 flex-1 gap-[3px] px-px">
        <div className="flex min-w-0 flex-1 flex-col gap-[3px]">
          <div className="flex min-h-0 flex-1 gap-[3px]">
            <NodeEditor />
            <Viewport />
          </div>
          <Timeline />
        </div>
        <div className="flex w-[331px] shrink-0 flex-col gap-[3px]">
          <Outliner />
          <Properties />
        </div>
      </main>
      <StatusBar />
    </div>
  );
}
